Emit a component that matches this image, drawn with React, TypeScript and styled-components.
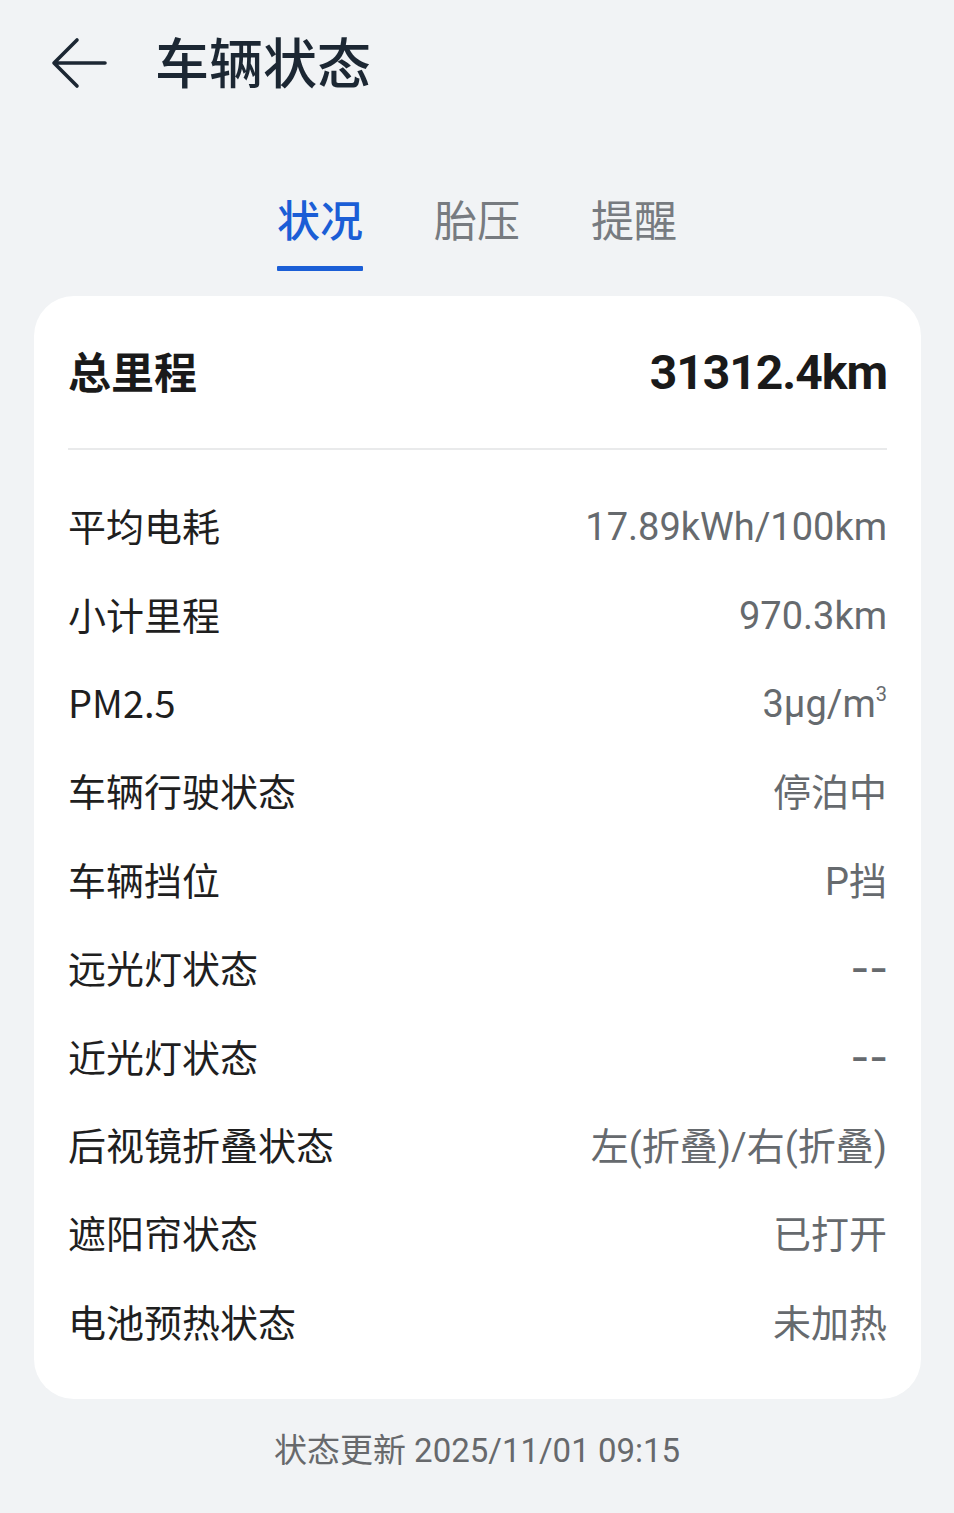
import styled, { createGlobalStyle } from "styled-components"

const Global = createGlobalStyle`
  html, body {
    margin: 0;
    padding: 0;
    background: #f1f3f5;
  }
  body {
    font-family: Roboto, "Noto Sans CJK SC", sans-serif;
    -webkit-font-smoothing: antialiased;
  }
`

const Page = styled.div`
  width: 954px;
  min-height: 1513px;
  background: #f1f3f5;
`

const Header = styled.header`
  height: 126px;
  display: flex;
  align-items: center;
  padding-left: 48px;
  gap: 45px;
`

const Back = styled.button`
  width: 62px;
  height: 62px;
  border: 0;
  padding: 0;
  background: none;
  display: flex;
  align-items: center;
  justify-content: center;
`

const Title = styled.h1`
  margin: 0;
  padding-bottom: 6px;
  font-family: "Noto Sans CJK SC", sans-serif;
  font-size: 54px;
  font-weight: 500;
  color: #1c2733;
`

const Tabs = styled.nav`
  display: flex;
  justify-content: center;
  gap: 71px;
  padding-top: 64px;
`

const Tab = styled.div<{ $active?: boolean }>`
  display: flex;
  flex-direction: column;
  align-items: center;
  font-family: "Noto Sans CJK SC", sans-serif;
  font-size: 43px;
  line-height: 56px;
  font-weight: ${p => (p.$active ? 500 : 400)};
  color: ${p => (p.$active ? "#1b5ed6" : "#777b80")};

  &::after {
    content: "";
    display: block;
    width: 100%;
    height: 5px;
    margin-top: 20px;
    border-radius: 1px;
    background: ${p => (p.$active ? "#1b5ed6" : "transparent")};
  }
`

const Card = styled.section`
  margin: 25px 33px 0 34px;
  background: #fff;
  border-radius: 40px;
  padding: 0 34px 32px;
`

const TotalRow = styled.div`
  height: 152px;
  display: flex;
  align-items: center;
  justify-content: space-between;
  border-bottom: 2px solid #e9eaeb;
`

const TotalLabel = styled.span`
  padding-bottom: 5px;
  font-family: "Noto Sans CJK SC", sans-serif;
  font-size: 43px;
  font-weight: 700;
  color: #1a1a1a;
`

const TotalValue = styled.span`
  font-family: Roboto, sans-serif;
  font-size: 48px;
  font-weight: 700;
  letter-spacing: -1px;
  color: #1a1a1a;
`

const List = styled.div`
  padding-top: 33px;
`

const Row = styled.div`
  height: 88.4px;
  display: flex;
  align-items: center;
  justify-content: space-between;
`

const Label = styled.span`
  padding-bottom: 5px;
  font-family: "Noto Sans CJK SC", Roboto, sans-serif;
  font-size: 38px;
  color: #1f1f1f;
`

const Value = styled.span<{ $cjk?: boolean }>`
  padding-bottom: ${p => (p.$cjk ? "5px" : "0")};
  font-family: Roboto, "Noto Sans CJK SC", sans-serif;
  font-size: 38px;
  color: #666a6e;

  sup {
    font-size: 20px;
    vertical-align: 0;
    position: relative;
    top: -16px;
  }
`

const Dashes = styled.span`
  display: inline-block;
  letter-spacing: 1px;
  margin-right: -2px;
  font-weight: 500;
  transform: scaleX(1.35);
  transform-origin: right center;
`

const Footer = styled.p`
  margin: 0;
  padding-top: 30px;
  line-height: 44px;
  text-align: center;
  font-family: Roboto, "Noto Sans CJK SC", sans-serif;
  font-size: 33px;
  color: #67696c;
`

const rows: { label: string; value: React.ReactNode; cjk?: boolean }[] = [
  { label: "平均电耗", value: "17.89kWh/100km" },
  { label: "小计里程", value: "970.3km" },
  { label: "PM2.5", value: <>3μg/m<sup>3</sup></> },
  { label: "车辆行驶状态", value: "停泊中", cjk: true },
  { label: "车辆挡位", value: "P挡", cjk: true },
  { label: "远光灯状态", value: <Dashes>--</Dashes> },
  { label: "近光灯状态", value: <Dashes>--</Dashes> },
  { label: "后视镜折叠状态", value: "左(折叠)/右(折叠)", cjk: true },
  { label: "遮阳帘状态", value: "已打开", cjk: true },
  { label: "电池预热状态", value: "未加热", cjk: true },
]

export default function App() {
  return (
    <Page>
      <Global />
      <Header>
        <Back aria-label="返回">
          <svg width="60" height="60" viewBox="0 0 60 60" fill="none">
            <path d="M6 30 H56 M28 7 L5 30 L28 53" stroke="#1c2733" strokeWidth="3.6" strokeLinecap="round" strokeLinejoin="round" />
          </svg>
        </Back>
        <Title>车辆状态</Title>
      </Header>

      <Tabs>
        <Tab $active>状况</Tab>
        <Tab>胎压</Tab>
        <Tab>提醒</Tab>
      </Tabs>

      <Card>
        <TotalRow>
          <TotalLabel>总里程</TotalLabel>
          <TotalValue>31312.4km</TotalValue>
        </TotalRow>
        <List>
          {rows.map(r => (
            <Row key={r.label}>
              <Label>{r.label}</Label>
              <Value $cjk={r.cjk}>{r.value}</Value>
            </Row>
          ))}
        </List>
      </Card>

      <Footer>状态更新 2025/11/01 09:15</Footer>
    </Page>
  )
}
